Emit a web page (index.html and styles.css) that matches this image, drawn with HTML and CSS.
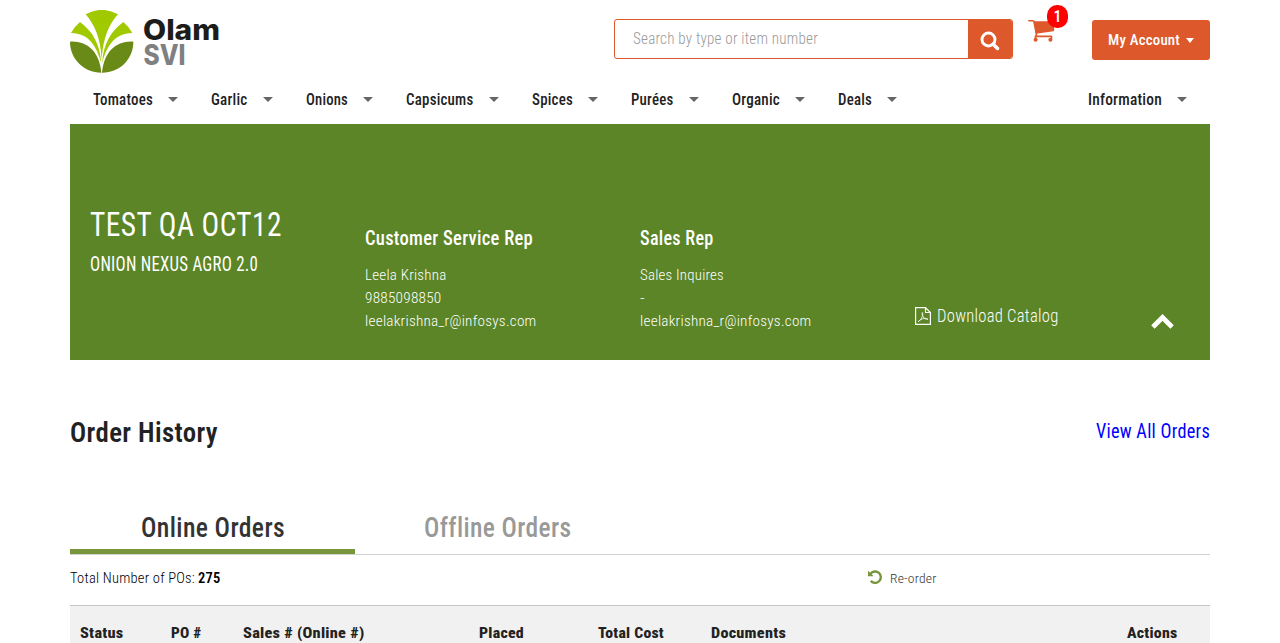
FILE: index.html
```html
<!DOCTYPE html>
<html lang="en">
<head>
<meta charset="utf-8">
<title>Olam SVI - My Account</title>
<link rel="stylesheet" href="styles.css">
</head>
<body>
<div class="page">
  <header class="header">
    <svg class="logo" width="150" height="64" viewBox="0 0 150 64">
      <g transform="translate(-10 -10) scale(.33333)">
        <g id="half">
          <path class="lime" d="M33 99 Q43 80 60 66 C98 94 120 132 124 190 C110 140 88 100 33 99Z"/>
          <path class="moss" d="M30 125 C82 122 118 155 124 218 C70 218 30 176 30 125Z"/>
        </g>
        <use href="#half" transform="translate(250 0) scale(-1 1)"/>
        <path class="lime" d="M77 43 Q125 16 174 43 C146 75 130 112 125 176 C121 112 104 75 77 43Z"/>
      </g>
      <text class="brand" x="73" y="29.500" textLength="77" lengthAdjust="spacingAndGlyphs">Olam</text>
      <text class="brand sub" x="73.500" y="54.500" textLength="42" lengthAdjust="spacingAndGlyphs">SVI</text>
    </svg>
    <div class="search">
      <div class="field"><svg class="t light s16 hint" width="185" height="20"><text y="15" textLength="185" lengthAdjust="spacingAndGlyphs">Search by type or item number</text></svg></div>
      <button class="go" aria-label="Search"><svg width="20" height="20" viewBox="0 0 20 20"><circle cx="8.500" cy="8.500" r="6.500" fill="none" stroke="#fff" stroke-width="2.900"/><path d="M13 13 L17.500 17.500" stroke="#fff" stroke-width="3.500" stroke-linecap="round"/></svg></button>
    </div>
    <div class="cart">
      <svg width="30" height="26" viewBox="0 0 30 26"><path class="line" d="M.8 2.700 H5 Q5.800 2.700 6 3.600 L8.500 16.500 L7.300 20.500 M7.300 18.400 H23.500 V20.500"/><path d="M5.400 3.200 H26.200 V12.300 Q26.200 13 25.500 13.200 L8 15.800Z"/><circle cx="7.600" cy="21.800" r="2"/><circle cx="22.400" cy="21.800" r="2"/></svg>
      <span class="badge">1</span>
    </div>
    <button class="account"><svg class="t medium s15" width="72" height="20"><text y="15" textLength="72" lengthAdjust="spacingAndGlyphs">My Account</text></svg><i class="caret"></i></button>
  </header>

  <nav class="nav">
    <a><svg class="t medium s16" width="60" height="20"><text y="15" textLength="60" lengthAdjust="spacingAndGlyphs">Tomatoes</text></svg><i class="caret"></i></a>
    <a><svg class="t medium s16" width="37" height="20"><text y="15" textLength="36.500" lengthAdjust="spacingAndGlyphs">Garlic</text></svg><i class="caret"></i></a>
    <a><svg class="t medium s16" width="42" height="20"><text y="15" textLength="42" lengthAdjust="spacingAndGlyphs">Onions</text></svg><i class="caret"></i></a>
    <a><svg class="t medium s16" width="68" height="20"><text y="15" textLength="67.500" lengthAdjust="spacingAndGlyphs">Capsicums</text></svg><i class="caret"></i></a>
    <a><svg class="t medium s16" width="41" height="20"><text y="15" textLength="41" lengthAdjust="spacingAndGlyphs">Spices</text></svg><i class="caret"></i></a>
    <a><svg class="t medium s16" width="43" height="20"><text y="15" textLength="42.500" lengthAdjust="spacingAndGlyphs">Purées</text></svg><i class="caret"></i></a>
    <a><svg class="t medium s16" width="48" height="20"><text y="15" textLength="48" lengthAdjust="spacingAndGlyphs">Organic</text></svg><i class="caret"></i></a>
    <a><svg class="t medium s16" width="34" height="20"><text y="15" textLength="34" lengthAdjust="spacingAndGlyphs">Deals</text></svg><i class="caret"></i></a>
    <a class="end"><svg class="t medium s16" width="74" height="20"><text y="15" textLength="74" lengthAdjust="spacingAndGlyphs">Information</text></svg><i class="caret"></i></a>
  </nav>

  <section class="banner">
    <div class="customer">
      <svg class="t s34" width="192" height="40"><text y="32" textLength="192" lengthAdjust="spacingAndGlyphs">TEST QA OCT12</text></svg>
      <svg class="t s19" width="168" height="30"><text y="27" textLength="168" lengthAdjust="spacingAndGlyphs">ONION NEXUS AGRO 2.0</text></svg>
    </div>
    <div class="rep">
      <svg class="t medium s19" width="168" height="26"><text y="20" textLength="168" lengthAdjust="spacingAndGlyphs">Customer Service Rep</text></svg>
      <svg class="t light s15 first" width="82" height="23"><text y="17" textLength="81.500" lengthAdjust="spacingAndGlyphs">Leela Krishna</text></svg>
      <svg class="t light s15" width="77" height="23"><text y="17" textLength="76.500" lengthAdjust="spacingAndGlyphs">9885098850</text></svg>
      <svg class="t light s15" width="171" height="23"><text y="17" textLength="171.500" lengthAdjust="spacingAndGlyphs">leelakrishna_r@infosys.com</text></svg>
    </div>
    <div class="rep">
      <svg class="t medium s19" width="74" height="26"><text y="20" textLength="73.500" lengthAdjust="spacingAndGlyphs">Sales Rep</text></svg>
      <svg class="t light s15 first" width="84" height="23"><text y="17" textLength="84" lengthAdjust="spacingAndGlyphs">Sales Inquires</text></svg>
      <svg class="t light s15" width="5" height="23"><text y="17" textLength="5" lengthAdjust="spacingAndGlyphs">-</text></svg>
      <svg class="t light s15" width="171" height="23"><text y="17" textLength="171.500" lengthAdjust="spacingAndGlyphs">leelakrishna_r@infosys.com</text></svg>
    </div>
    <div class="actions">
      <a class="download"><svg width="16" height="18" viewBox="0 0 16 18" fill="none" stroke="#fff" stroke-width="1.200"><path d="M.6 .6H10.500L15.400 5.500V17.400H.6Z M10.500 .6V5.500H15.400"/><path stroke-width=".8" d="M7.200 5.500Q6.500 8.500 9 11Q10.500 12.400 13 12.200Q11 10.800 7.500 11.800Q4.500 12.800 3.200 14.700Q6.500 13 7.700 8.500Q8 6 7.200 5.500"/></svg><svg class="t light s18" width="122" height="24"><text y="18" textLength="121.500" lengthAdjust="spacingAndGlyphs">Download Catalog</text></svg></a>
      <svg class="up" width="24" height="16" viewBox="0 0 24 16"><path d="M1.900 13 L11.500 3.500 L21.100 13" fill="none" stroke="#fff" stroke-width="4.800"/></svg>
    </div>
  </section>

  <div class="title-row">
    <svg class="t semi s27" width="148" height="40"><text y="30" textLength="148" lengthAdjust="spacingAndGlyphs">Order History</text></svg>
    <a class="all"><svg class="t s19" width="114" height="30"><text y="22" textLength="114" lengthAdjust="spacingAndGlyphs">View All Orders</text></svg></a>
  </div>

  <div class="tabs">
    <div class="tab active"><svg class="t medium s27" width="144" height="40"><text y="30" textLength="144" lengthAdjust="spacingAndGlyphs">Online Orders</text></svg></div>
    <div class="tab"><svg class="t medium s27" width="148" height="40"><text y="30" textLength="147.500" lengthAdjust="spacingAndGlyphs">Offline Orders</text></svg></div>
  </div>

  <div class="summary">
    <div class="total"><svg class="t light s15" width="125" height="20"><text y="15" textLength="125" lengthAdjust="spacingAndGlyphs">Total Number of POs:</text></svg><svg class="t semi s15" width="23" height="20"><text y="15" textLength="22.500" lengthAdjust="spacingAndGlyphs">275</text></svg></div>
    <a class="reorder"><svg width="14" height="14" viewBox="0 0 14 14"><path d="M2.600 3.700 A5.700 5.700 0 1 1 2.800 10.900" fill="none" stroke="#77963c" stroke-width="2.400"/><path d="M0 .7 L5.700 6.300 H0Z" fill="#77963c"/></svg><svg class="t s13" width="47" height="20"><text y="15" textLength="46.500" lengthAdjust="spacingAndGlyphs">Re-order</text></svg></a>
  </div>

  <div class="thead">
    <div><svg class="t bold s15" width="44" height="20"><text y="15" textLength="43.500" lengthAdjust="spacingAndGlyphs">Status</text></svg></div>
    <div><svg class="t bold s15" width="31" height="20"><text y="15" textLength="30.500" lengthAdjust="spacingAndGlyphs">PO #</text></svg></div>
    <div><svg class="t bold s15" width="122" height="20"><text y="15" textLength="121.500" lengthAdjust="spacingAndGlyphs">Sales # (Online #)</text></svg></div>
    <div><svg class="t bold s15" width="45" height="20"><text y="15" textLength="45" lengthAdjust="spacingAndGlyphs">Placed</text></svg></div>
    <div><svg class="t bold s15" width="66" height="20"><text y="15" textLength="66" lengthAdjust="spacingAndGlyphs">Total Cost</text></svg></div>
    <div><svg class="t bold s15" width="75" height="20"><text y="15" textLength="75" lengthAdjust="spacingAndGlyphs">Documents</text></svg></div>
    <div><svg class="t bold s15" width="51" height="20"><text y="15" textLength="50.500" lengthAdjust="spacingAndGlyphs">Actions</text></svg></div>
  </div>
</div>
</body>
</html>
```
FILE: styles.css
```css
* { box-sizing: border-box; }
body { margin: 0; background: #fff; color: #222; font-family: "Roboto Condensed", Roboto, sans-serif; height: 643px; overflow: hidden; }
svg { display: block; flex: none; }
button { border: 0; padding: 0; font: inherit; }
.page { width: 1140px; margin: 0 auto; }

/* text */
.t { overflow: visible; font-family: "Roboto Condensed", Roboto, sans-serif; font-stretch: 75%; font-weight: 400; fill: currentColor; letter-spacing: .015em; }
.light { font-weight: 300; }
.medium { font-weight: 500; }
.semi { font-weight: 600; }
.bold { font-weight: 800; }
.s13 { font-size: 13px; font-weight: 350; }
.s15 { font-size: 15.500px; }
.s16 { font-size: 16px; }
.s18 { font-size: 18.500px; }
.s19 { font-size: 19.500px; }
.s27 { font-size: 27px; }
.s34 { font-size: 34px; }

/* header */
.header { display: flex; align-items: flex-start; height: 84px; padding-top: 10px; }
.lime { fill: #a1c900; }
.moss { fill: #6a8a17; }
.brand { font: 800 28px Inter, sans-serif; fill: #1c1c1b; }
.brand.sub { fill: #808080; }
.search { display: flex; width: 399px; height: 40px; margin: 9px 0 0 394px; border: 1px solid #dd582a; border-radius: 3px; overflow: hidden; }
.field { flex: 1; padding: 9px 0 0 17.500px; }
.hint { color: #999; }
.go { display: flex; width: 44px; background: #dd582a; padding: 11px 0 0 12px; align-items: flex-start; }
.cart { position: relative; width: 40px; height: 30px; margin: 8px 0 0 15px; }
.cart svg { fill: #dd582a; }
.cart .line { fill: none; stroke: #dd582a; stroke-width: 1.600; stroke-linecap: round; stroke-linejoin: round; }
.badge { position: absolute; left: 19px; top: -13px; width: 21px; height: 23px; border-radius: 10px; background: #f00; color: #fff; font-size: 16px; font-weight: 500; line-height: 23px; text-align: center; }
.account { display: flex; width: 118px; height: 40px; margin: 10px 0 0 24px; padding: 10px 0 0 16px; gap: 6px; background: #dd582a; border-radius: 3px; color: #fff; }
.caret { width: 10px; height: 5px; background: #666; clip-path: polygon(0 0, 100% 0, 50% 100%); }
.account .caret { width: 8px; margin-top: 8px; background: #fff; }

/* navigation */
.nav { display: flex; height: 40px; padding: 6px 23px 0 23px; gap: 33px; }
.nav a { display: flex; gap: 15px; }
.nav .caret { margin-top: 7px; }
.nav .end { margin-left: auto; }

/* account banner */
.banner { display: grid; grid-template-columns: repeat(4, 275px); height: 236px; padding: 0 20px; background: #5b8526; color: #fff; }
.customer { padding-top: 80px; }
.rep { padding-top: 101px; }
.first { margin-top: 12px; }
.actions { display: flex; align-items: flex-start; }
.download { display: flex; gap: 6px; margin-top: 180px; }
.download svg:first-child { margin-top: 3px; }
.up { margin: 190px 0 0 92px; }

/* orders */
.title-row { display: flex; justify-content: space-between; padding-top: 52px; height: 134px; }
.all { color: #00f; padding-top: 4px; }
.tabs { display: flex; height: 61px; border-bottom: 1px solid #d3d3d3; }
.tab { display: flex; justify-content: center; width: 285px; height: 60px; padding-top: 13px; color: #999; }
.tab.active { color: #333; border-bottom: 5px solid #77963c; }
.summary { display: flex; height: 50px; padding-top: 13px; }
.total { display: flex; gap: 3px; color: #000; }
.reorder { display: flex; gap: 8px; margin-left: 647px; color: #333; }
.reorder svg:first-child { margin-top: 2px; }
.thead { display: grid; grid-template-columns: 91px 72px 236px 119px 113px 416px 51px; height: 60px; padding: 17px 10px 0; border-top: 1px solid #c5c5c5; background: #f1f1f1; color: #222; }
```
